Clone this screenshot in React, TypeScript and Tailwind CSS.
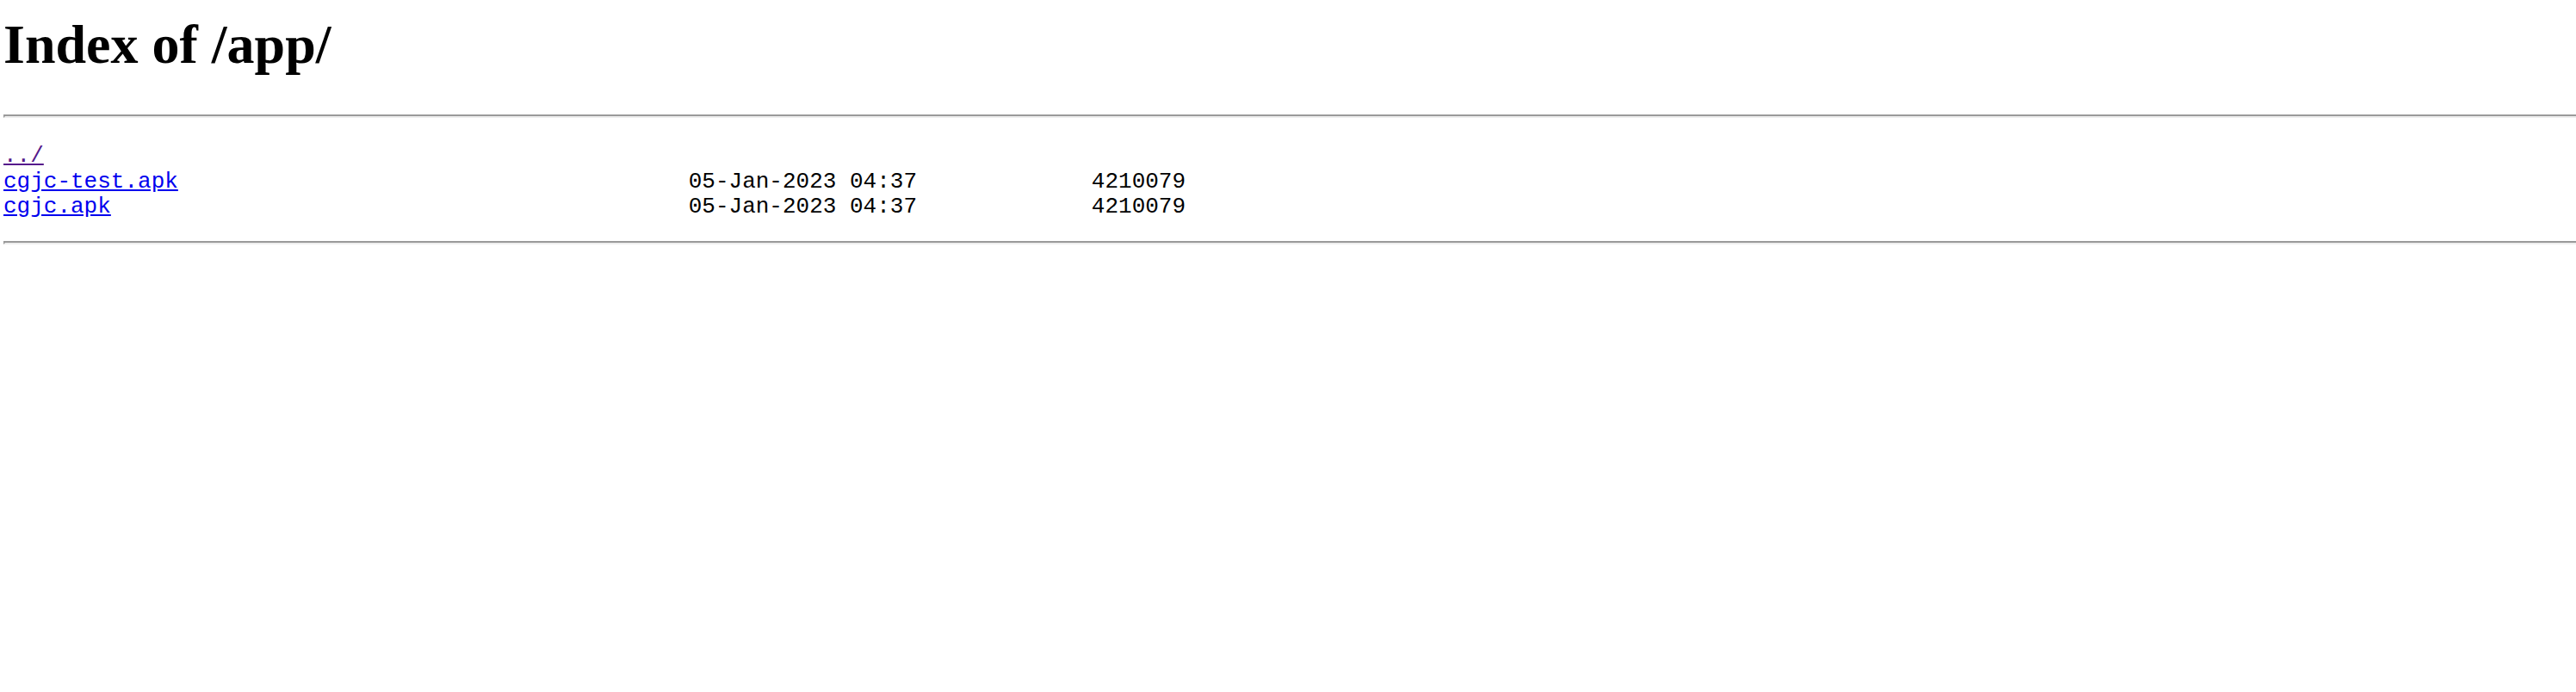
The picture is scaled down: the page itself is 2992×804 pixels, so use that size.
const entries = [
  { name: "cgjc-test.apk", date: "05-Jan-2023 04:37", size: "4210079" },
  { name: "cgjc.apk", date: "05-Jan-2023 04:37", size: "4210079" },
];

function Rule({ className }: { className: string }) {
  return (
    <hr
      className={`h-0 border-0 border-t-2 border-t-[#9a9a9a] border-b-2 border-b-[#eeeeee] border-l-2 border-l-[#9a9a9a] ${className}`}
    />
  );
}

export default function App() {
  return (
    <div className="min-h-[804px] bg-white pl-[4px] text-black">
      <h1 className="mt-[15px] mb-[44px] font-['Liberation_Serif',serif] text-[64px] font-bold leading-[74px]">
        Index of /app/
      </h1>
      <Rule className="" />
      <pre className="mt-[30px] mb-[24px] font-['Liberation_Mono',monospace] text-[26px] leading-[29.5px] whitespace-pre">
        <a href="#" className="text-[#551a8b] underline">
          ../
        </a>
        {"\n"}
        {entries.map((e) => (
          <span key={e.name}>
            <a href="#" className="text-[#0000ee] underline">
              {e.name}
            </a>
            {" ".repeat(51 - e.name.length)}
            {e.date}
            {e.size.padStart(20, " ")}
            {"\n"}
          </span>
        ))}
      </pre>
      <Rule className="" />
    </div>
  );
}
